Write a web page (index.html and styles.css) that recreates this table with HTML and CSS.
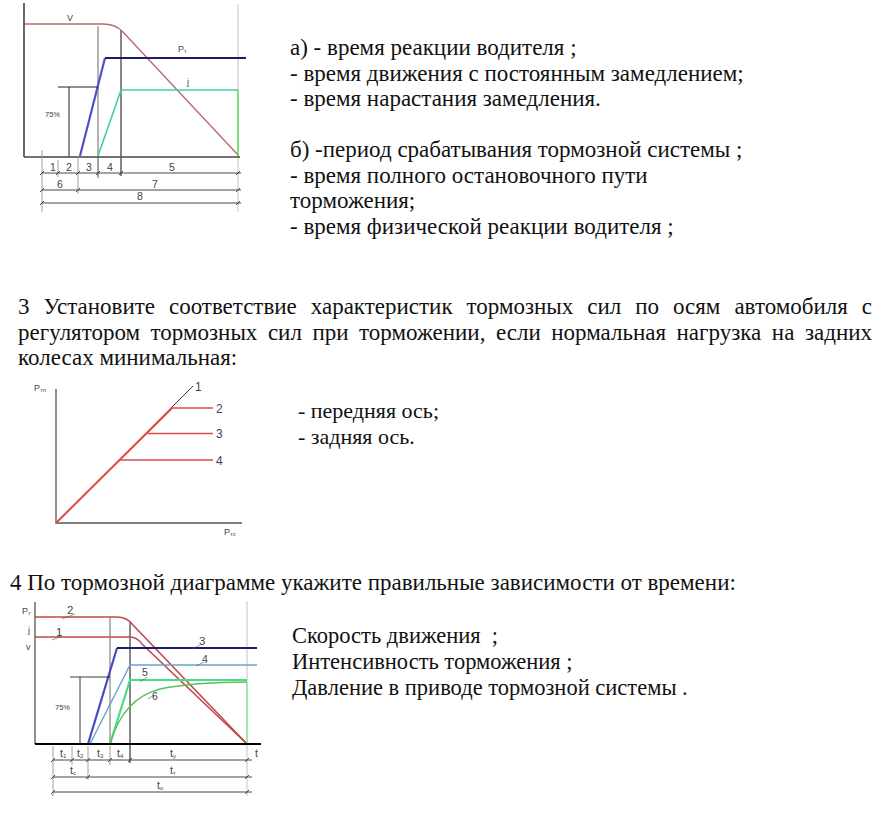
FILE: index.html
```html
<!DOCTYPE html>
<html lang="ru">
<head>
<meta charset="utf-8">
<title>Тормозные диаграммы</title>
<link rel="stylesheet" href="styles.css">
</head>
<body>
<div class="page">
  <section class="row row1">
    <svg class="fig fig1" width="250" height="215" viewBox="0 0 250 215">
      <g fill="none">
        <line x1="238" y1="4" x2="238" y2="212" stroke="#c4c4c4" stroke-width="1"/>
        <line x1="98" y1="26" x2="98" y2="178" stroke="#b4b4b4" stroke-width="2"/>
        <line x1="121" y1="30" x2="121" y2="176" stroke="#222" stroke-width="1.1"/>
        <path d="M24 24 H103 C112 24 118 27 122 31 L238 155" stroke="#b86c6c" stroke-width="1.4"/>
        <path d="M80 156 L105 58" stroke="#5050c8" stroke-width="2.2"/>
        <path d="M105 58 H246" stroke="#1c1c6e" stroke-width="2"/>
        <path d="M98 156 L121 90 H238" stroke="#44ccaa" stroke-width="1.6"/>
        <path d="M238 90 V156" stroke="#66dd66" stroke-width="1.6"/>
        <path d="M58 87 H98 M69 87 V157" stroke="#222" stroke-width="1"/>
        <line x1="24" y1="3" x2="24" y2="157" stroke="#444" stroke-width="1.6"/>
        <line x1="24" y1="157" x2="240" y2="157" stroke="#444" stroke-width="1.6"/>
        <g stroke="#888" stroke-width="0.8">
          <path d="M42 150 V212 M58 160 V177 M78 157 V194 M98 157 V176 M121 157 V176"/>
        </g>
        <g stroke="#333" stroke-width="0.9">
          <path d="M42 173 H241 M42 190 H241 M42 203 H241"/>
          <path d="M56 175 L60 171 M76 175 L80 171 M96 175 L100 171 M119 175 L123 171 M236 175 L240 171 M76 192 L80 188 M236 192 L240 188 M236 205 L240 201 M40 175 L44 171 M40 192 L44 188 M40 205 L44 201"/>
        </g>
      </g>
      <g class="lbl" font-size="10.5">
        <text x="67" y="21" fill="#888" font-size="9">V</text>
        <text x="178" y="52" font-size="9">P<tspan font-size="6" dy="1">т</tspan></text>
        <text x="187" y="85" fill="#777" font-size="9">j</text>
        <text x="45" y="117" font-size="7.5">75%</text>
        <text x="50" y="171">1</text>
        <text x="66" y="171">2</text>
        <text x="86" y="171">3</text>
        <text x="107" y="171">4</text>
        <text x="169" y="171">5</text>
        <text x="57" y="188">6</text>
        <text x="152" y="188">7</text>
        <text x="137" y="200">8</text>
      </g>
    </svg>
    <div class="answers a1">
      <p>а) - время реакции водителя ;</p>
      <p>- время движения с постоянным замедлением;</p>
      <p>- время нарастания замедления.</p>
      <p class="blank">&nbsp;</p>
      <p>б) -период срабатывания тормозной системы ;</p>
      <p>- время полного остановочного пути<br>торможения;</p>
      <p>- время физической реакции водителя ;</p>
    </div>
  </section>

  <p class="q q3">3 Установите соответствие характеристик тормозных сил по осям автомобиля с регулятором тормозных сил при торможении, если нормальная нагрузка на задних колесах минимальная:</p>

  <section class="row row2">
    <svg class="fig fig2" width="250" height="175" viewBox="0 370 250 175">
      <g fill="none">
        <path d="M56 388 V522 H242" stroke="#555" stroke-width="1.3"/>
        <path d="M56 522 L193 385" stroke="#333" stroke-width="1"/>
        <path d="M56 522 L172 407" stroke="#e04848" stroke-width="2"/>
        <path d="M172 407 H213 M148 432.5 H213 M120 459 H213" stroke="#e04848" stroke-width="1.6"/>
      </g>
      <g class="lbl" font-size="12" fill="#555">
        <text x="195" y="390">1</text>
        <text x="216" y="412">2</text>
        <text x="216" y="437">3</text>
        <text x="216" y="464">4</text>
        <text x="34" y="390" font-size="9">P<tspan font-size="6" dy="1">тп</tspan></text>
        <text x="224" y="534" font-size="9">P<tspan font-size="6" dy="1">тс</tspan></text>
      </g>
    </svg>
    <div class="answers a2">
      <p>- передняя ось;</p>
      <p>- задняя ось.</p>
    </div>
  </section>

  <p class="q q4">4 По тормозной диаграмме укажите правильные зависимости от времени:</p>

  <section class="row row3">
    <svg class="fig fig3" width="270" height="222" viewBox="0 595 270 222">
      <g fill="none">
        <line x1="247" y1="601" x2="247" y2="796" stroke="#c4c4c4" stroke-width="1"/>
        <line x1="110" y1="617" x2="110" y2="744" stroke="#b4b4b4" stroke-width="2"/>
        <line x1="130" y1="622" x2="130" y2="763" stroke="#222" stroke-width="1.1"/>
        <path d="M35 617 H117 C125 617 130 621 133 625 L247 744" stroke="#c04a4a" stroke-width="1.6"/>
        <path d="M35 637 H130 C135 637 139 640 142 644 L247 744" stroke="#c04a4a" stroke-width="1.6"/>
        <path d="M88 744 L117 648" stroke="#4848c0" stroke-width="2.2"/>
        <path d="M117 648 H257" stroke="#1c1c6e" stroke-width="2"/>
        <path d="M90 744 L130 665 H257" stroke="#6aa0d8" stroke-width="1.4"/>
        <path d="M110 744 L130 680 H247" stroke="#44dd88" stroke-width="2.2"/>
        <path d="M110 744 C118 716 133 696 160 689 C190 683 220 682 247 682" stroke="#5cbf5c" stroke-width="1.3"/>
        <path d="M247 682 V744" stroke="#88ee88" stroke-width="1.5"/>
        <path d="M70 677 H110 M80 677 V744" stroke="#222" stroke-width="0.9"/>
        <path d="M62 619 L75 614 M52 640 L62 636 M192 649 L200 645 M196 666 L204 662 M140 682 L147 677 M148 699 L154 695" stroke="#555" stroke-width="0.6"/>
        <line x1="35" y1="602" x2="35" y2="744" stroke="#555" stroke-width="1.3"/>
        <line x1="35" y1="744" x2="261" y2="744" stroke="#000" stroke-width="2.2"/>
        <g stroke="#888" stroke-width="0.8">
          <path d="M53 746 V796 M72 746 V765 M88 746 V780 M110 746 V765"/>
        </g>
        <g stroke="#333" stroke-width="0.9">
          <path d="M53 760 H252 M53 777 H252 M53 792 H252"/>
          <path d="M51 762 L55 758 M70 762 L74 758 M86 762 L90 758 M108 762 L112 758 M128 762 L132 758 M245 762 L249 758 M51 779 L55 775 M86 779 L90 775 M245 779 L249 775 M51 794 L55 790 M245 794 L249 790"/>
        </g>
      </g>
      <g class="lbl" font-size="10.5">
        <text x="67" y="614" font-size="11.5">2</text>
        <text x="56" y="636" font-size="11.5">1</text>
        <text x="199" y="645" font-size="11.5">3</text>
        <text x="202" y="663" font-size="10.5">4</text>
        <text x="142" y="676" font-size="10.5">5</text>
        <text x="152" y="700" font-size="10.5">6</text>
        <text x="55" y="710" font-size="7.5">75%</text>
        <text x="22" y="614" font-size="9">P<tspan font-size="6" dy="1">т</tspan></text>
        <text x="28" y="633" font-size="9">j</text>
        <text x="26" y="650" font-size="9">v</text>
        <text x="255" y="757" font-size="10.5">t</text>
        <text x="60" y="757">t<tspan font-size="6" dy="1">1</tspan></text>
        <text x="77" y="757">t<tspan font-size="6" dy="1">2</tspan></text>
        <text x="97" y="757">t<tspan font-size="6" dy="1">3</tspan></text>
        <text x="117" y="757">t<tspan font-size="6" dy="1">4</tspan></text>
        <text x="170" y="757">t<tspan font-size="6" dy="1">у</tspan></text>
        <text x="70" y="774">t<tspan font-size="6" dy="1">с</tspan></text>
        <text x="170" y="774">t<tspan font-size="6" dy="1">т</tspan></text>
        <text x="157" y="789">t<tspan font-size="6" dy="1">о</tspan></text>
      </g>
    </svg>
    <div class="answers a3">
      <p>Скорость движения&nbsp; ;</p>
      <p>Интенсивность торможения ;</p>
      <p>Давление в приводе тормозной системы .</p>
    </div>
  </section>
</div>
</body>
</html>
```
FILE: styles.css
```css
html, body {
  margin: 0;
  padding: 0;
  background: #fff;
}
body {
  font-family: "Liberation Serif", "Times New Roman", serif;
  color: #111;
  width: 888px;
  height: 817px;
  overflow: hidden;
}
.page {
  display: flex;
  flex-direction: column;
}
.row {
  display: flex;
  align-items: flex-start;
}
.fig {
  display: block;
  flex: none;
}
.lbl text {
  font-family: "Liberation Sans", Arial, sans-serif;
  fill: #444;
}
.answers p {
  margin: 0;
}
.a1 {
  margin-left: 40px;
  margin-top: 35px;
  font-size: 23px;
  line-height: 25.5px;
  white-space: nowrap;
}
.q {
  margin: 0;
  font-size: 23px;
  line-height: 25.5px;
}
.q3 {
  margin-top: 55px;
  padding: 0 16px 0 18px;
  text-align: justify;
}
.a2 {
  margin-left: 48px;
  margin-top: 27px;
  font-size: 22px;
  line-height: 26px;
}
.q4 {
  margin-top: 24px;
  padding-left: 10px;
  white-space: nowrap;
}
.a3 {
  margin-left: 22px;
  margin-top: 28px;
  font-size: 22.5px;
  line-height: 26px;
}
```
